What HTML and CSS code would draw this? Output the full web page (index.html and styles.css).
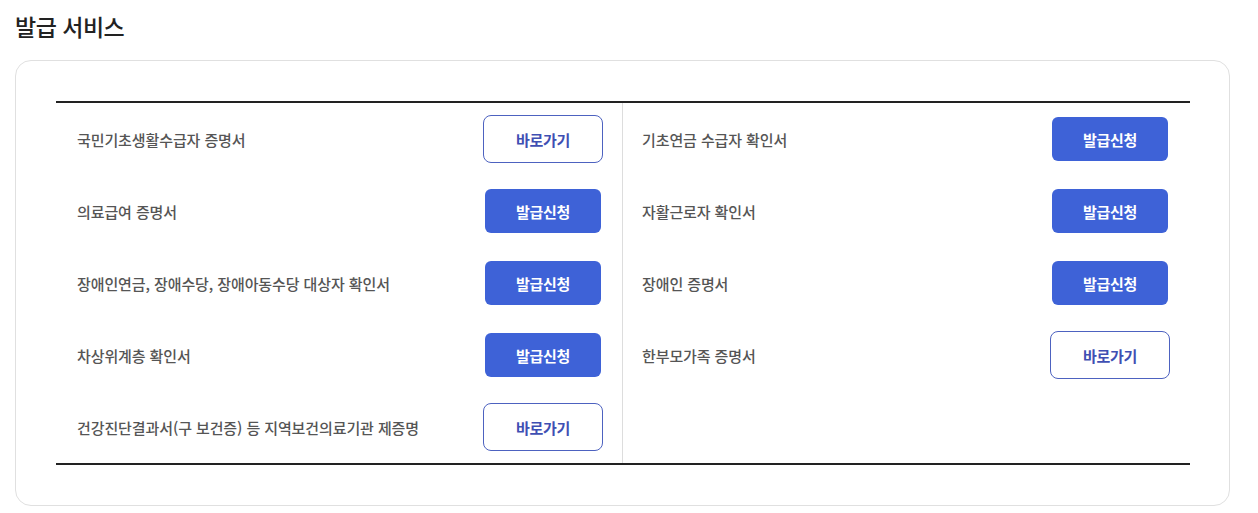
FILE: index.html
```html
<!DOCTYPE html>
<html lang="ko">
<head>
    <meta charset="UTF-8">
    <meta name="viewport" content="width=device-width, initial-scale=1.0">
    <link rel="stylesheet" href="styles.css">
</head>
<body>
    <div class="page">
        <h2 class="title">발급 서비스</h2>

        <div class="card">
            <div class="service-list">
                <div class="service-item">
                    <span class="service-name">국민기초생활수급자 증명서</span>
                    <a class="btn btn-outline" href="#">바로가기</a>
                </div>
                <div class="service-item">
                    <span class="service-name">기초연금 수급자 확인서</span>
                    <a class="btn btn-fill" href="#">발급신청</a>
                </div>
                <div class="service-item">
                    <span class="service-name">의료급여 증명서</span>
                    <a class="btn btn-fill" href="#">발급신청</a>
                </div>
                <div class="service-item">
                    <span class="service-name">자활근로자 확인서</span>
                    <a class="btn btn-fill" href="#">발급신청</a>
                </div>
                <div class="service-item">
                    <span class="service-name">장애인연금, 장애수당, 장애아동수당 대상자 확인서</span>
                    <a class="btn btn-fill" href="#">발급신청</a>
                </div>
                <div class="service-item">
                    <span class="service-name">장애인 증명서</span>
                    <a class="btn btn-fill" href="#">발급신청</a>
                </div>
                <div class="service-item">
                    <span class="service-name">차상위계층 확인서</span>
                    <a class="btn btn-fill" href="#">발급신청</a>
                </div>
                <div class="service-item">
                    <span class="service-name">한부모가족 증명서</span>
                    <a class="btn btn-outline" href="#">바로가기</a>
                </div>
                <div class="service-item">
                    <span class="service-name">건강진단결과서(구 보건증) 등 지역보건의료기관 제증명</span>
                    <a class="btn btn-outline" href="#">바로가기</a>
                </div>
                <div class="service-item empty"></div>
            </div>
        </div>
    </div>
</body>
</html>
```

FILE: styles.css
```css
* {
    margin: 0;
    padding: 0;
    box-sizing: border-box;
}

body {
    font-family: "Noto Sans CJK KR", "Noto Sans", sans-serif;
    background-color: #fff;
    color: #222;
}

.page {
    padding: 9px 28px 8px 15px;
}

.title {
    font-size: 23px;
    font-weight: 500;
    line-height: 34px;
    color: #222;
    letter-spacing: -0.5px;
    margin-bottom: 17px;
}

.card {
    border: 1px solid #e0e0e0;
    border-radius: 16px;
    padding: 40px 39px 40px 40px;
}

.service-list {
    display: grid;
    grid-template-columns: 1fr 1fr;
    grid-auto-rows: 72px;
    border-top: 2px solid #222;
    border-bottom: 2px solid #222;
}

.service-item {
    display: flex;
    align-items: center;
    justify-content: space-between;
    padding: 0 20px 0 19px;
}

.service-item:nth-child(odd) {
    border-right: 1px solid #ddd;
    padding: 0 19px 0 21px;
}

.service-name {
    font-size: 15px;
    font-weight: 500;
    color: #555;
    letter-spacing: -0.1px;
}

.btn {
    display: flex;
    align-items: center;
    justify-content: center;
    font-size: 15px;
    font-weight: 700;
    text-decoration: none;
    letter-spacing: -0.3px;
    border-radius: 6px;
}

.btn-outline {
    width: 120px;
    height: 48px;
    border: 1px solid #4d62c0;
    color: #3f4fb3;
    background-color: #fff;
    border-radius: 8px;
}

.btn-fill {
    width: 116px;
    height: 44px;
    margin-right: 2px;
    background-color: #3e62d7;
    color: #fff;
}
```
